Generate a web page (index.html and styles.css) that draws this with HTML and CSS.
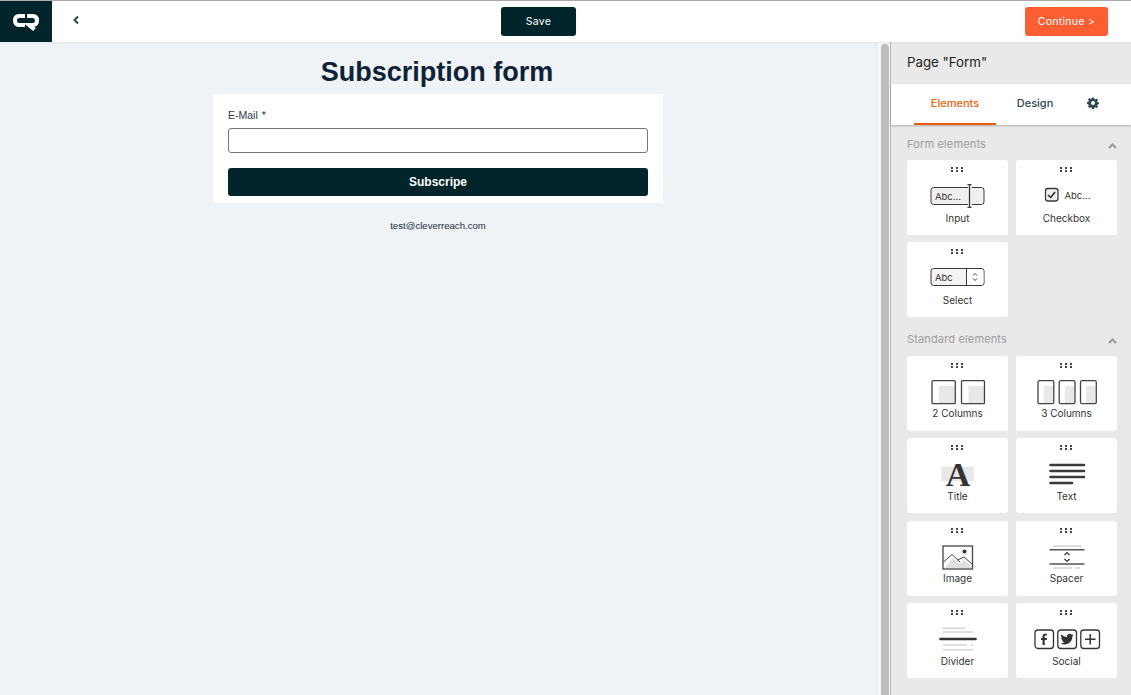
FILE: index.html
```
<!DOCTYPE html>
<html lang="en">
<head>
<meta charset="utf-8">
<title>Subscription form</title>
<link rel="stylesheet" href="styles.css">
</head>
<body>
<header class="topbar">
  <div class="logo">
    <svg width="26" height="18" viewBox="0 0 26 18" fill="none" stroke="#fff" stroke-width="4">
      <path d="M12 3H6Q2 3 2 7.500Q2 12 6 12H12"/>
      <path d="M14 3H20Q24 3 24 7.500Q24 12 20 12H16L21.500 16.500"/>
    </svg>
  </div>
  <div class="back-cell">
    <svg width="8" height="10" viewBox="0 0 8 10" fill="none" stroke="#2f4650" stroke-width="2"><path d="M6 1.500L2.500 5L6 8.500"/></svg>
  </div>
  <div class="save-cell"><button class="btn btn-save">Save</button></div>
  <button class="btn btn-continue">Continue &gt;</button>
</header>
<div class="workspace">
  <main class="canvas">
    <h1 class="form-title">Subscription form</h1>
    <form class="form-card">
      <label class="field-label">E-Mail *</label>
      <div class="field-input"></div>
      <div class="submit">Subscripe</div>
    </form>
    <p class="footer-mail">test@cleverreach.com</p>
  </main>
  <div class="scrolltrack"><div class="scrollthumb"></div></div>
  <aside class="panel">
    <div class="panel-head">Page "Form"</div>
    <nav class="tabs">
      <span class="tab tab-active">Elements</span>
      <span class="tab tab-design">Design</span>
      <svg class="gear" width="12" height="12" viewBox="0 0 24 24"><path fill="#2f4650" fill-rule="evenodd" d="M10 1h4l.6 3.100 2 .8L19.200 3.200 22 6l-1.700 2.600.8 2L24 11v3.500l-2.900.5-.8 2L22 19.600 19.400 22.400l-2.600-1.800-2 .8L14 24h-4l-.6-2.900-2-.8L4.800 22 2 19.200l1.700-2.400-.8-2L0 14.200V10.200l2.900-.6.800-2L2 5 4.800 2.200 7.400 3.900l2-.8zM12 8a4 4 0 1 0 0 8 4 4 0 0 0 0-8z"/></svg>
    </nav>
    <section class="group group-first">
      <div class="group-title"><span>Form elements</span>
        <svg width="9" height="6" viewBox="0 0 9 6" fill="none" stroke="#999" stroke-width="2"><path d="M1 5L4.500 1.500L8 5"/></svg></div>
      <div class="cards cards-compact">
        <div class="card"><span class="grip"></span>
          <svg class="ico" width="56" height="26" viewBox="0 0 56 26">
            <rect x="1" y="3.500" width="53" height="17" rx="2.500" fill="#f0f0f0" stroke="#3a3a3a"/>
            <rect x="38" y="2" width="4" height="20" fill="#f0f0f0"/>
            <rect x="38" y="2" width="3" height="1" fill="#fff"/>
            <text x="5" y="15.500" class="ico-text">Abc...</text>
            <path d="M37.500.7h4M39.500.7v22.600M37.500 23.300h4" stroke="#3a3a3a" stroke-width="1.300" fill="none"/>
          </svg>
          <span class="card-label">Input</span></div>
        <div class="card"><span class="grip"></span>
          <svg class="ico" width="56" height="26" viewBox="0 0 56 26">
            <rect x="6.500" y="4.500" width="12.500" height="12.500" rx="2.500" fill="#f0f0f0" stroke="#3a3a3a" stroke-width="1.300"/>
            <path d="M9 11L11.800 13.500L16 8" fill="none" stroke="#222" stroke-width="1.500"/>
            <text x="25.500" y="14.500" class="ico-text">Abc...</text>
          </svg>
          <span class="card-label">Checkbox</span></div>
        <div class="card"><span class="grip"></span>
          <svg class="ico" width="56" height="26" viewBox="0 0 56 26">
            <rect x="1" y="2.500" width="53" height="17" rx="2.500" fill="#f3f3f3" stroke="#3a3a3a"/>
            <rect x="37" y="3" width="16.500" height="16" rx="2" fill="#fff"/>
            <path d="M36.500 2.500v17" stroke="#3a3a3a"/>
            <path d="M43 9.500l2-2 2 2M43 12.500l2 2 2-2" fill="none" stroke="#3a3a3a"/>
            <text x="5" y="15" class="ico-text">Abc</text>
          </svg>
          <span class="card-label">Select</span></div>
      </div>
    </section>
    <section class="group">
      <div class="group-title"><span>Standard elements</span>
        <svg width="9" height="6" viewBox="0 0 9 6" fill="none" stroke="#999" stroke-width="2"><path d="M1 5L4.500 1.500L8 5"/></svg></div>
      <div class="cards">
        <div class="card"><span class="grip"></span>
          <svg class="ico" width="56" height="26" viewBox="0 0 56 26">
            <rect x="9" y="6" width="16" height="17" fill="#e8e8e8"/>
            <rect x="38.500" y="6" width="16" height="17" fill="#e8e8e8"/>
            <rect x="2" y=".7" width="23.300" height="23" rx="1" fill="none" stroke="#444" stroke-width="1.300"/>
            <rect x="31.500" y=".7" width="23" height="23" rx="1" fill="none" stroke="#444" stroke-width="1.300"/>
          </svg>
          <span class="card-label">2 Columns</span></div>
        <div class="card"><span class="grip"></span>
          <svg class="ico" width="60" height="26" viewBox="0 0 60 26">
            <rect x="6.800" y="6" width="9.500" height="17" fill="#e8e8e8"/>
            <rect x="27.800" y="6" width="9.500" height="17" fill="#e8e8e8"/>
            <rect x="49" y="6" width="9.500" height="17" fill="#e8e8e8"/>
            <rect x="1" y=".7" width="15.800" height="23" rx="1.500" fill="none" stroke="#444" stroke-width="1.300"/>
            <rect x="22.200" y=".7" width="15.800" height="23" rx="1.500" fill="none" stroke="#444" stroke-width="1.300"/>
            <rect x="43.500" y=".7" width="15.800" height="23" rx="1.500" fill="none" stroke="#444" stroke-width="1.300"/>
          </svg>
          <span class="card-label">3 Columns</span></div>
        <div class="card"><span class="grip"></span>
          <svg class="ico" width="36" height="26" viewBox="0 0 36 26">
            <rect x="1.500" y="4.700" width="32.500" height="14.500" fill="#e8e8e8"/>
            <text x="18" y="23.500" class="ico-serif" text-anchor="middle">A</text>
          </svg>
          <span class="card-label">Title</span></div>
        <div class="card"><span class="grip"></span>
          <svg class="ico" width="36" height="26" viewBox="0 0 36 26" stroke="#3a3a3a" stroke-width="2.600" stroke-linecap="round">
            <path d="M1.500 3H35M1.500 9H35M1.500 15H35M1.500 21H23"/>
          </svg>
          <span class="card-label">Text</span></div>
        <div class="card"><span class="grip"></span>
          <svg class="ico" width="32" height="26" viewBox="0 0 32 26">
            <path d="M3 23L11 13 17 19 23 15 30 23z" fill="#e0e0e0"/>
            <rect x="1" y="1" width="29.500" height="23" fill="none" stroke="#444" stroke-width="1.300"/>
            <path d="M1.500 17L10 9.500 18 17M15.500 15L22 12 30 19" fill="none" stroke="#444"/>
            <circle cx="22.500" cy="6.500" r="2" fill="#333"/>
          </svg>
          <span class="card-label">Image</span></div>
        <div class="card"><span class="grip"></span>
          <svg class="ico" width="36" height="26" viewBox="0 0 36 26">
            <path d="M4 1H32.500M4 23H23M26 23H31" stroke="#d5d5d5" stroke-width="1.500"/>
            <path d="M.5 4.800H35.500M.5 19H35.500" stroke="#555" stroke-width="1.500"/>
            <path d="M15.500 10l2.500-2.500L20.500 10M15.500 14l2.500 2.500L20.500 14" fill="none" stroke="#333" stroke-width="1.200"/>
          </svg>
          <span class="card-label">Spacer</span></div>
        <div class="card"><span class="grip"></span>
          <svg class="ico" width="38" height="26" viewBox="0 0 38 26">
            <path d="M4 1.300H26.500M4 5H34M4 18H28M32 18H34M4 22.700H34" stroke="#d5d5d5" stroke-width="1.500"/>
            <path d="M1.500 12H36.500" stroke="#333" stroke-width="2.600" stroke-linecap="round"/>
          </svg>
          <span class="card-label">Divider</span></div>
        <div class="card"><span class="grip"></span>
          <svg class="ico" width="66" height="26" viewBox="0 0 66 26">
            <rect x="1" y="3" width="18.500" height="18.500" rx="3" fill="none" stroke="#333" stroke-width="1.300"/>
            <rect x="23.800" y="3" width="18.700" height="18.500" rx="3" fill="none" stroke="#333" stroke-width="1.300"/>
            <rect x="46.800" y="3" width="18.700" height="18.500" rx="3" fill="none" stroke="#333" stroke-width="1.300"/>
            <path d="M11 8.500h2V6.800h-2.200Q8.500 6.800 8.500 9.200V11H7v2h1.500v5h2.200v-5h2l.3-2h-2.300V9.500Q10.700 8.500 11 8.500z" fill="#333"/>
            <path d="M23.953 4.570a10 10 0 01-2.825.775 4.958 4.958 0 002.163-2.723c-.951.555-2.005.959-3.127 1.184a4.920 4.920 0 00-8.384 4.482C7.690 8.095 4.067 6.130 1.640 3.162a4.822 4.822 0 00-.666 2.475c0 1.710.870 3.213 2.188 4.096a4.904 4.904 0 01-2.228-.616v.060a4.923 4.923 0 003.946 4.827 4.996 4.996 0 01-2.212.085 4.936 4.936 0 004.604 3.417 9.867 9.867 0 01-6.102 2.105c-.390 0-.779-.023-1.170-.067a13.995 13.995 0 007.557 2.209c9.053 0 13.998-7.496 13.998-13.985 0-.210 0-.420-.015-.630A9.935 9.935 0 0024 4.590z" fill="#333" transform="translate(26.500 5.500) scale(.55)"/>
            <path d="M56.200 7v10.500M51 12.300h10.500" stroke="#333" stroke-width="1.500"/>
          </svg>
          <span class="card-label">Social</span></div>
      </div>
    </section>
  </aside>
</div>
</body>
</html>
```

FILE: styles.css
```
* { box-sizing: border-box; }
html, body { margin: 0; height: 100%; overflow: hidden; }
body { font-family: "Inter", "Open Sans", sans-serif; background: #eff3f6; }

.topbar {
  height: 42px;
  display: flex;
  align-items: center;
  background: #fff;
  border-top: 1px solid #a9a9a9;
  position: relative;
  box-shadow: 0 1px 3px rgba(0,0,0,.06);
}
.logo {
  width: 52px;
  height: 41px;
  background: #02242b;
  display: flex;
  align-items: center;
  justify-content: center;
}
.back-cell { width: 48px; display: flex; justify-content: center; padding-bottom: 3px; }
.save-cell { margin-left: 401px; }
.btn {
  border: 0;
  border-radius: 3px;
  color: #fff;
  font-family: inherit;
  font-size: 10.500px;
  height: 29px;
  padding: 0;
  letter-spacing: .3px;
}
.btn-save { display: block; width: 75px; background: #02242b; }
.btn-continue { width: 83px; background: #fc5d31; margin-left: auto; margin-right: 23px; }

.workspace { display: flex; height: 653px; }
.canvas {
  width: 876px;
  display: flex;
  flex-direction: column;
  align-items: center;
}
.form-title {
  margin: 13px 0 0;
  padding-right: 2px;
  font: 700 27px/34px "Liberation Sans", Arial, sans-serif;
  color: #0e2238;
}
.form-card {
  margin-top: 5px;
  width: 450px;
  height: 109px;
  background: #fff;
  padding: 15px 15px 0;
  font-family: "Liberation Sans", Arial, sans-serif;
}
.field-label { display: block; font-size: 10.500px; line-height: 12px; word-spacing: 1px; color: #2a3a4a; }
.field-input {
  margin-top: 7px;
  height: 25px;
  border: 1px solid #767676;
  border-radius: 3px;
  background: #fff;
}
.submit {
  margin-top: 15px;
  height: 28px;
  background: #02242b;
  border-radius: 3px;
  color: #fff;
  font-size: 12px;
  font-weight: 700;
  line-height: 28px;
  text-align: center;
}
.footer-mail {
  margin: 17px 0 0;
  font: 9.600px/12px "Liberation Sans", Arial, sans-serif;
  color: #1e2e3c;
}

.scrolltrack { width: 14px; background: #f5f6f7; padding: 2px 1px 0 4px; border-left: 1px solid #e6e8ea; }
.scrollthumb { width: 8px; height: 100%; background: #bdbdbd; border-radius: 4px 4px 0 0; }

.panel {
  width: 241px;
  background: #e9e9e9;
  border-left: 1px solid #b5b5b5;
  display: flex;
  flex-direction: column;
}
.panel-head {
  height: 42px;
  padding: 11px 0 0 16px;
  font-size: 13.300px;
  line-height: 18px;
  color: #222;
}
.tabs {
  height: 41px;
  background: #fff;
  box-shadow: 0 1px 2px rgba(0,0,0,.25);
  display: flex;
  align-items: center;
  padding-left: 23px;
  position: relative;
}
.tab { font-size: 11px; height: 41px; line-height: 39px; font-weight: 500; text-align: center; }
.tab-active { width: 82px; color: #f0620e; border-bottom: 2px solid #ee5a0c; }
.tab-design { width: 78px; color: #2f4650; }
.gear { margin: -3px 0 0 13px; }

.group { padding: 0 14px 0 16px; }
.group-first { margin-top: 12px; }
.group + .group { margin-top: 15px; }
.group-title {
  display: flex;
  justify-content: space-between;
  align-items: center;
  height: 14px;
  font-size: 11px;
  letter-spacing: .15px;
  color: #9c9c9c;
  margin-bottom: 9px;
}
.group + .group .group-title { margin-bottom: 9.500px; }
.group-title svg { margin-top: 3px; }
.cards { display: grid; grid-template-columns: 101px 101px; column-gap: 8px; row-gap: 7.500px; }
.cards-compact { row-gap: 7px; }
.card {
  height: 75px;
  background: #fff;
  border-radius: 3px;
  display: flex;
  flex-direction: column;
  align-items: center;
  position: relative;
  padding-top: 6px;
}
.grip {
  width: 13px;
  height: 5px;
  margin-top: 1px;
  background-image: radial-gradient(circle at 1px 1px, #444 1px, transparent 1.100px);
  background-size: 5px 3px;
}
.ico { margin-top: 12px; display: block; flex: none; overflow: visible; }
.ico-text { font: 9.500px "Inter", sans-serif; fill: #333; }
.ico-serif { font: 700 34px "Liberation Serif", serif; fill: #333; }
.card-label { position: absolute; left: 0; right: 0; top: 51.400px; font-size: 10px; line-height: 13px; text-align: center; color: #333; }
.cards-compact .card-label,
.card:nth-child(4n+3) .card-label,
.card:nth-child(4n+4) .card-label { top: 52px; }
```
